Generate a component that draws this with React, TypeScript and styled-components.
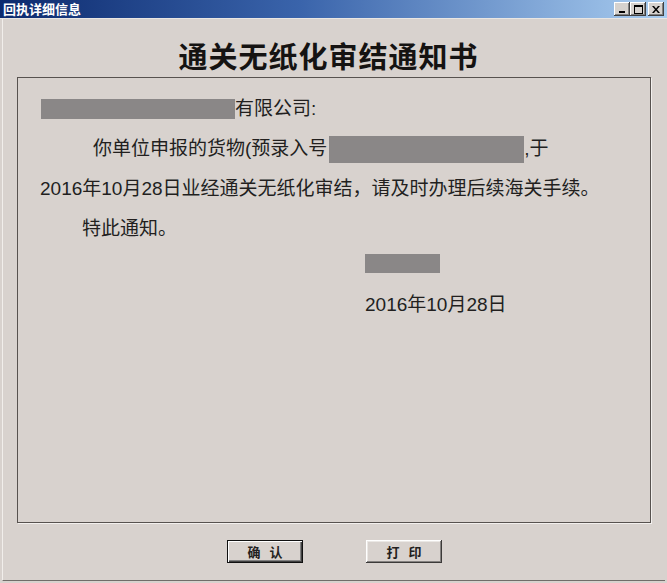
import React from "react";
import styled, { createGlobalStyle } from "styled-components";

const GlobalStyle = createGlobalStyle`
  html, body {
    margin: 0;
    padding: 0;
    background: #d8d2ce;
  }
  body {
    font-family: "Liberation Sans", "Noto Sans CJK SC", sans-serif;
    color: #221f1e;
  }
`;

const Window = styled.div`
  width: 667px;
  height: 583px;
  display: flex;
  flex-direction: column;
  background: #d8d2ce;
  overflow: hidden;
`;

const TitleBar = styled.div`
  height: 18px;
  flex: none;
  display: flex;
  align-items: center;
  justify-content: space-between;
  padding: 0 3px 0 3px;
  background: linear-gradient(90deg, #0c2a6e 0%, #3a64ab 45%, #a9cdf0 100%);
  border-bottom: 1px solid #e9e6e3;
`;

const TitleText = styled.span`
  color: #ffffff;
  font-family: "Noto Sans CJK SC", sans-serif;
  font-size: 13px;
  font-weight: 700;
  line-height: 16px;
`;

const Controls = styled.div`
  display: flex;
  align-items: center;
`;

const CtrlButton = styled.div<{ $gap?: boolean }>`
  width: 16px;
  height: 14px;
  box-sizing: border-box;
  margin-left: ${({ $gap }) => ($gap ? "2px" : "0")};
  background: #d6d2ce;
  display: flex;
  align-items: center;
  justify-content: center;
  box-shadow: inset -1px -1px #404040, inset 1px 1px #ffffff,
    inset -2px -2px #808080;
`;

const Body = styled.div`
  flex: 1;
  display: flex;
  flex-direction: column;
  margin: 0 2px 2px 2px;
  border-left: 1px solid #f1eeeb;
  border-bottom: 1px solid #716c69;
`;

const Heading = styled.h1`
  margin: 0;
  height: 58px;
  box-sizing: border-box;
  padding: 19px 11px 0 0;
  text-align: center;
  font-family: "Noto Sans CJK SC", sans-serif;
  font-size: 29px;
  font-weight: 700;
  line-height: 34px;
  letter-spacing: 1px;
  color: #151312;
`;

const Panel = styled.div`
  height: 446px;
  box-sizing: border-box;
  margin: 0 14px 0 14px;
  padding: 11px 0 0 22px;
  border: 1px solid #57524f;
  box-shadow: 1px 1px 0 #f3f0ee;
`;

const Row = styled.div<{ $indent?: number; $h?: number; $top?: number }>`
  display: flex;
  align-items: center;
  height: ${({ $h }) => $h ?? 40}px;
  margin-top: ${({ $top }) => $top ?? 0}px;
  padding-left: ${({ $indent }) => $indent ?? 0}px;
  font-size: 19px;
  line-height: 24px;
  white-space: nowrap;
`;

const Redact = styled.span<{ $w: number; $h: number; $ml?: number }>`
  display: inline-block;
  flex: none;
  width: ${({ $w }) => $w}px;
  height: ${({ $h }) => $h}px;
  margin-left: ${({ $ml }) => $ml ?? 0}px;
  background: #8a8787;
`;

const ButtonRow = styled.div`
  display: flex;
  justify-content: center;
  gap: 63px;
  margin-top: 17px;
  padding-left: 1px;
`;

const Button = styled.button<{ $default?: boolean }>`
  width: 76px;
  height: 23px;
  box-sizing: border-box;
  padding: 0 0 0 3px;
  background: #d8d2ce;
  font-family: "Noto Sans CJK SC", sans-serif;
  font-size: 13px;
  font-weight: 700;
  letter-spacing: 3px;
  color: #232120;
  border: ${({ $default }) => ($default ? "1px solid #111" : "none")};
  box-shadow: ${({ $default }) =>
    $default
      ? "inset 1px 1px #ffffff, inset -1px -1px #404040, inset -2px -2px #808080"
      : "inset -1px -1px #3c3a39, inset 1px 1px #ffffff, inset -2px -2px #858280, inset 2px 2px #ebe8e5"};
`;

const MinIcon = () => (
  <svg width="8" height="7" viewBox="0 0 8 7">
    <rect x="1" y="5" width="6" height="2" fill="#000" />
  </svg>
);

const MaxIcon = () => (
  <svg width="9" height="9" viewBox="0 0 9 9">
    <rect x="0.5" y="0.5" width="8" height="8" fill="none" stroke="#000" />
    <rect x="0" y="0" width="9" height="2" fill="#000" />
  </svg>
);

const CloseIcon = () => (
  <svg width="8" height="7" viewBox="0 0 8 7">
    <path d="M0 0 L2 0 L4 2.5 L6 0 L8 0 L5 3.5 L8 7 L6 7 L4 4.5 L2 7 L0 7 L3 3.5 Z" fill="#000" />
  </svg>
);

const App = () => {
  return (
    <>
      <GlobalStyle />
      <Window>
        <TitleBar>
          <TitleText>回执详细信息</TitleText>
          <Controls>
            <CtrlButton>
              <MinIcon />
            </CtrlButton>
            <CtrlButton>
              <MaxIcon />
            </CtrlButton>
            <CtrlButton $gap>
              <CloseIcon />
            </CtrlButton>
          </Controls>
        </TitleBar>
        <Body>
          <Heading>通关无纸化审结通知书</Heading>
          <Panel>
            <Row>
              <Redact $w={194} $h={20} $ml={1} />
              有限公司:
            </Row>
            <Row $indent={53}>
              你单位申报的货物(预录入号
              <Redact $w={195} $h={27} $ml={2} />
              ,于
            </Row>
            <Row>2016年10月28日业经通关无纸化审结，请及时办理后续海关手续。</Row>
            <Row $indent={42}>特此通知。</Row>
            <Row $indent={325} $h={28}>
              <Redact $w={75} $h={19} />
            </Row>
            <Row $indent={325} $h={28} $top={14}>
              2016年10月28日
            </Row>
          </Panel>
          <ButtonRow>
            <Button $default>确 认</Button>
            <Button>打 印</Button>
          </ButtonRow>
        </Body>
      </Window>
    </>
  );
};

export default App;
